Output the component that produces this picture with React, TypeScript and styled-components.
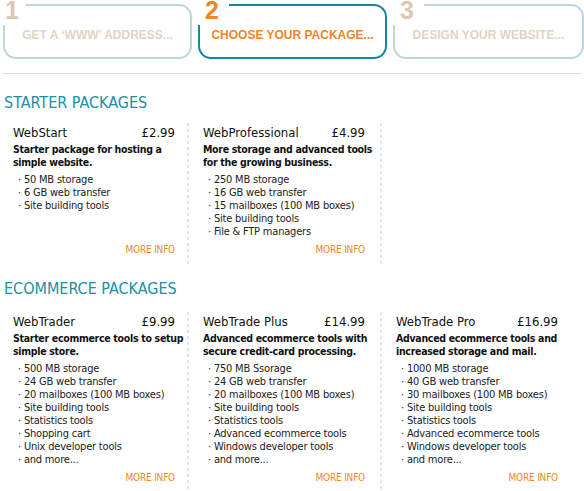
import styled, { createGlobalStyle } from 'styled-components';

const GlobalStyle = createGlobalStyle`
  body {
    margin: 0;
    background: #ffffff;
    font-family: 'DejaVu Sans Condensed', 'DejaVu Sans', sans-serif;
    color: #1a1a1a;
  }
`;

interface Step {
  num: string;
  label: string;
  active?: boolean;
  numLeft: number;
  cover: number;
}

interface Pack {
  name: string;
  price: string;
  desc: string;
  items: string[];
}

const steps: Step[] = [
  { num: '1', label: 'GET A ‘WWW’ ADDRESS...', numLeft: 2, cover: 23 },
  { num: '2', label: 'CHOOSE YOUR PACKAGE...', active: true, numLeft: 7, cover: 31 },
  { num: '3', label: 'DESIGN YOUR WEBSITE...', numLeft: 7, cover: 31 },
];

const starter: Pack[] = [
  {
    name: 'WebStart',
    price: '£2.99',
    desc: 'Starter package for hosting a simple website.',
    items: ['50 MB storage', '6 GB web transfer', 'Site building tools'],
  },
  {
    name: 'WebProfessional',
    price: '£4.99',
    desc: 'More storage and advanced tools for the growing business.',
    items: [
      '250 MB storage',
      '16 GB web transfer',
      '15 mailboxes (100 MB boxes)',
      'Site building tools',
      'File & FTP managers',
    ],
  },
];

const ecommerce: Pack[] = [
  {
    name: 'WebTrader',
    price: '£9.99',
    desc: 'Starter ecommerce tools to setup simple store.',
    items: [
      '500 MB storage',
      '24 GB web transfer',
      '20 mailboxes (100 MB boxes)',
      'Site building tools',
      'Statistics tools',
      'Shopping cart',
      'Unix developer tools',
      'and more...',
    ],
  },
  {
    name: 'WebTrade Plus',
    price: '£14.99',
    desc: 'Advanced ecommerce tools with secure credit-card processing.',
    items: [
      '750 MB Ssorage',
      '24 GB web transfer',
      '20 mailboxes (100 MB boxes)',
      'Site building tools',
      'Statistics tools',
      'Advanced ecommerce tools',
      'Windows developer tools',
      'and more...',
    ],
  },
  {
    name: 'WebTrade Pro',
    price: '£16.99',
    desc: 'Advanced ecommerce tools and increased storage and mail.',
    items: [
      '1000 MB storage',
      '40 GB web transfer',
      '30 mailboxes (100 MB boxes)',
      'Site building tools',
      'Statistics tools',
      'Advanced ecommerce tools',
      'Windows developer tools',
      'and more...',
    ],
  },
];

const PackageCard = ({ pack, divider }: { pack: Pack; divider: boolean }) => (
  <Card $divider={divider}>
    <CardInner>
      <TitleRow>
        <span>{pack.name}</span>
        <span>{pack.price}</span>
      </TitleRow>
      <Desc>{pack.desc}</Desc>
      <List>
        {pack.items.map((item) => (
          <li key={item}>· {item}</li>
        ))}
      </List>
      <MoreInfo href="#">MORE INFO</MoreInfo>
    </CardInner>
  </Card>
);

const App = () => {
  return (
    <>
      <GlobalStyle />
      <Page>
        <Steps>
          {steps.map((step) => (
            <StepTab key={step.num}>
              <StepBox $active={step.active}>
                <StepLabel $active={step.active}>{step.label}</StepLabel>
              </StepBox>
              <StepNum $active={step.active} $left={step.numLeft} $cover={step.cover}>
                {step.num}
              </StepNum>
            </StepTab>
          ))}
        </Steps>
        <Rule />
        <SectionTitle $top={19} $bottom={10}>
          STARTER PACKAGES
        </SectionTitle>
        <CardRow>
          {starter.map((pack) => (
            <PackageCard key={pack.name} pack={pack} divider />
          ))}
        </CardRow>
        <SectionTitle $top={13} $bottom={13}>
          ECOMMERCE PACKAGES
        </SectionTitle>
        <CardRow>
          {ecommerce.map((pack, i) => (
            <PackageCard key={pack.name} pack={pack} divider={i < 2} />
          ))}
        </CardRow>
      </Page>
    </>
  );
};

const Page = styled.div`
  width: 584px;
`;

const Steps = styled.div`
  display: grid;
  grid-template-columns: 189px 189px 191px;
  gap: 6px;
  padding-left: 3px;
`;

const StepTab = styled.div`
  position: relative;
  padding-top: 4px;
`;

const StepBox = styled.div<{ $active?: boolean }>`
  display: flex;
  height: 55px;
  box-sizing: border-box;
  align-items: center;
  justify-content: center;
  padding-top: 6px;

  border: 2px solid ${({ $active }) => ($active ? '#138a9b' : '#bcd8de')};
  border-radius: 13px;
`;

const StepLabel = styled.span<{ $active?: boolean }>`
  font-family: 'Liberation Sans', Arial, sans-serif;
  font-size: 12px;
  font-weight: bold;
  color: ${({ $active }) => ($active ? '#f08526' : '#e4d2c2')};
`;

const StepNum = styled.div<{ $active?: boolean; $left: number; $cover: number }>`
  position: absolute;
  top: 0;
  left: 0;
  width: ${({ $cover }) => $cover}px;
  height: 25px;
  padding-left: ${({ $left }) => $left}px;
  box-sizing: border-box;

  background: #ffffff;
  font-family: 'Liberation Sans', Arial, sans-serif;
  font-size: 25px;
  font-weight: bold;
  line-height: 21px;
  color: ${({ $active }) => ($active ? '#f08526' : '#dcc7b3')};
`;

const Rule = styled.div`
  height: 1px;
  margin: 14px 2px 0;
  background: #d6e0e2;
`;

const SectionTitle = styled.h2<{ $top: number; $bottom: number }>`
  margin: ${({ $top, $bottom }) => `${$top}px 0 ${$bottom}px 4px`};
  font-size: 16px;
  font-weight: normal;
  line-height: 20px;
  color: #1991a2;
`;

const CardRow = styled.div`
  display: grid;
  grid-template-columns: 190px 193px 193px;
`;

const Card = styled.div<{ $divider: boolean }>`
  display: flex;
  padding: 2px 0 10px 13px;

  background: ${({ $divider }) =>
    $divider
      ? 'linear-gradient(#d6e9f0 0 3px, transparent 3px 6px) right 1px top / 2px 6px repeat-y'
      : 'none'};
`;

const CardInner = styled.div`
  display: flex;
  width: 162px;
  flex-direction: column;
`;

const TitleRow = styled.div`
  display: flex;
  justify-content: space-between;
  font-size: 13px;
  line-height: 16px;
  color: #111111;
`;

const Desc = styled.p`
  width: 172px;
  margin: 2px 0 4px;
  font-size: 10.5px;
  font-weight: bold;
  letter-spacing: -0.3px;
  line-height: 13px;
  color: #111111;
`;

const List = styled.ul`
  margin: 0;
  padding: 0 0 0 5px;
  list-style: none;
  font-size: 11px;
  letter-spacing: -0.2px;
  line-height: 13px;
  color: #222222;
`;

const MoreInfo = styled.a`
  margin-top: auto;
  padding-top: 5px;
  align-self: flex-end;
  font-size: 10px;
  letter-spacing: -0.2px;
  line-height: 13px;
  color: #f08526;
  text-decoration: none;
`;

export default App;
